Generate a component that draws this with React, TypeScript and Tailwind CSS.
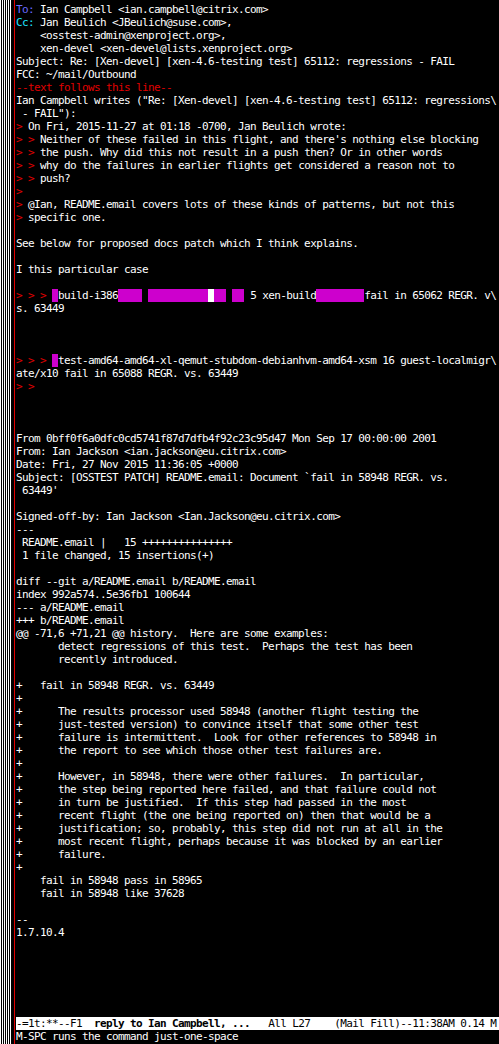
import React from "react";

type Seg = { t: string; c?: string };
type Line = Seg[];

const RED = "text-[#e00000]";
const BLUE = "text-[#6a6aff]";
const CYAN = "text-[#1ee0ff]";
const MAG = "bg-[#cd00cd]";

const s = (t: string, c?: string): Seg => ({ t, c });
const q = (t: string): Seg => s(t, RED);
const m = (t: string): Seg => s(t, MAG);

const lines: Line[] = [
  [s("To:", BLUE), s(" Ian Campbell <ian.campbell@citrix.com>")],
  [s("Cc:", CYAN), s(" Jan Beulich <JBeulich@suse.com>,")],
  [s("    <osstest-admin@xenproject.org>,")],
  [s("    xen-devel <xen-devel@lists.xenproject.org>")],
  [s("Subject: Re: [Xen-devel] [xen-4.6-testing test] 65112: regressions - FAIL")],
  [s("FCC: ~/mail/Outbound")],
  [s("--text follows this line--", RED)],
  [s('Ian Campbell writes ("Re: [Xen-devel] [xen-4.6-testing test] 65112: regressions\\')],
  [s(' - FAIL"):')],
  [q("> "), s("On Fri, 2015-11-27 at 01:18 -0700, Jan Beulich wrote:")],
  [q("> > "), s("Neither of these failed in this flight, and there's nothing else blocking")],
  [q("> > "), s("the push. Why did this not result in a push then? Or in other words")],
  [q("> > "), s("why do the failures in earlier flights get considered a reason not to")],
  [q("> > "), s("push?")],
  [q(">")],
  [q("> "), s("@Ian, README.email covers lots of these kinds of patterns, but not this")],
  [q("> "), s("specific one.")],
  [],
  [s("See below for proposed docs patch which I think explains.")],
  [],
  [s("I this particular case")],
  [],
  [
    q("> > > "),
    m(" "),
    s("build-i386"),
    m("    "),
    s(" "),
    m("          "),
    s(" ", "bg-white"),
    m("  "),
    s(" "),
    m("  "),
    s(" 5 xen-build"),
    m("        "),
    s("fail in 65062 REGR. v\\"),
  ],
  [s("s. 63449")],
  [],
  [],
  [],
  [
    q("> > > "),
    m(" "),
    s("test-amd64-amd64-xl-qemut-stubdom-debianhvm-amd64-xsm 16 guest-localmigr\\"),
  ],
  [s("ate/x10 fail in 65088 REGR. vs. 63449")],
  [q("> >")],
  [],
  [],
  [],
  [s("From 0bff0f6a0dfc0cd5741f87d7dfb4f92c23c95d47 Mon Sep 17 00:00:00 2001")],
  [s("From: Ian Jackson <ian.jackson@eu.citrix.com>")],
  [s("Date: Fri, 27 Nov 2015 11:36:05 +0000")],
  [s("Subject: [OSSTEST PATCH] README.email: Document `fail in 58948 REGR. vs.")],
  [s(" 63449'")],
  [],
  [s("Signed-off-by: Ian Jackson <Ian.Jackson@eu.citrix.com>")],
  [s("---")],
  [s(" README.email |   15 +++++++++++++++")],
  [s(" 1 file changed, 15 insertions(+)")],
  [],
  [s("diff --git a/README.email b/README.email")],
  [s("index 992a574..5e36fb1 100644")],
  [s("--- a/README.email")],
  [s("+++ b/README.email")],
  [s("@@ -71,6 +71,21 @@ history.  Here are some examples:")],
  [s("       detect regressions of this test.  Perhaps the test has been")],
  [s("       recently introduced.")],
  [],
  [s("+   fail in 58948 REGR. vs. 63449")],
  [s("+")],
  [s("+      The results processor used 58948 (another flight testing the")],
  [s("+      just-tested version) to convince itself that some other test")],
  [s("+      failure is intermittent.  Look for other references to 58948 in")],
  [s("+      the report to see which those other test failures are.")],
  [s("+")],
  [s("+      However, in 58948, there were other failures.  In particular,")],
  [s("+      the step being reported here failed, and that failure could not")],
  [s("+      in turn be justified.  If this step had passed in the most")],
  [s("+      recent flight (the one being reported on) then that would be a")],
  [s("+      justification; so, probably, this step did not run at all in the")],
  [s("+      most recent flight, perhaps because it was blocked by an earlier")],
  [s("+      failure.")],
  [s("+")],
  [s("    fail in 58948 pass in 58965")],
  [s("    fail in 58948 like 37628")],
  [],
  [s("--")],
  [s("1.7.10.4")],
  [],
  [],
  [],
  [],
  [],
  [],
];

function Row({ segs, className }: { segs: Line; className?: string }) {
  return (
    <div className={"h-[13px] whitespace-pre leading-[13px] " + (className ?? "")}>
      {segs.map((g, i) => (
        <span key={i} className={g.c}>
          {g.t}
        </span>
      ))}
    </div>
  );
}

export default function App() {
  return (
    <div className="flex h-[1044px] w-[499px] overflow-hidden bg-black font-['DejaVu_Sans_Mono',monospace] text-[11px] tracking-[-0.62px] text-white">
      {/* fringe */}
      <div className="w-[12px] shrink-0 bg-[repeating-linear-gradient(90deg,#ffffff_0px,#ffffff_1px,#000000_1px,#000000_2px)]" />
      <div className="w-[2px] shrink-0" />
      <div className="w-px shrink-0 bg-[#e00000]" />
      <div className="w-px shrink-0" />
      <div className="flex min-w-0 flex-1 flex-col pt-[3px]">
        {lines.map((l, i) => (
          <Row key={i} segs={l} />
        ))}
        <Row
          className="bg-white text-black"
          segs={[
            s("-=1t:**--F1  "),
            s("reply to Ian Campbell, ...", "font-bold"),
            s("   All L27    (Mail Fill)--11:38AM 0.14 M"),
          ]}
        />
        <Row segs={[s("M-SPC runs the command just-one-space")]} />
      </div>
    </div>
  );
}
